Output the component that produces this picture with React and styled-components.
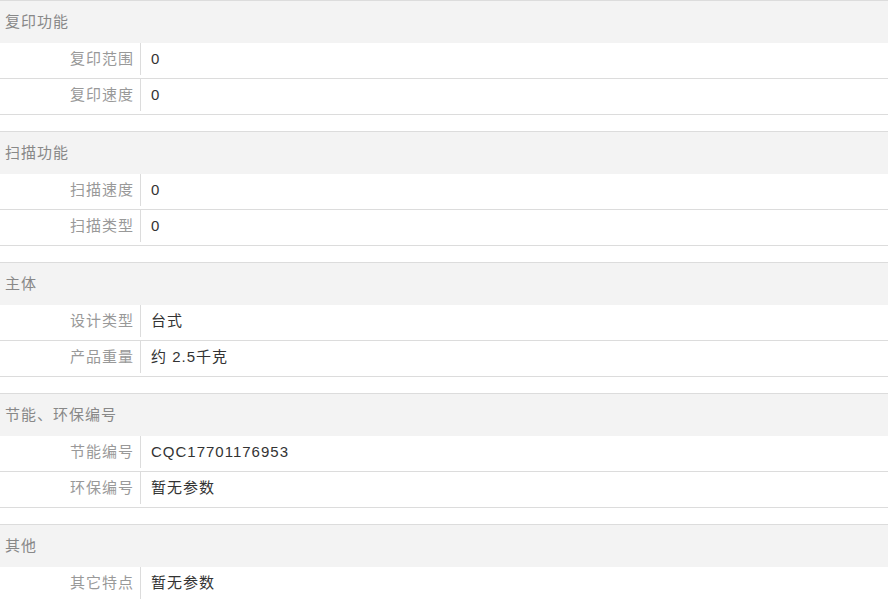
import React from "react";
import styled, { createGlobalStyle } from "styled-components";

const Global = createGlobalStyle`
  html, body { margin: 0; padding: 0; background: #fff; }
  body { font-family: "Liberation Sans", "Noto Sans CJK SC", sans-serif; }
`;

const Page = styled.div`
  width: 888px;
`;

const Section = styled.section`
  border-top: 1px solid #dcdcdc;
  margin-bottom: 16px;
`;

const Header = styled.h3`
  margin: 0;
  height: 42px;
  line-height: 42px;
  padding-left: 5px;
  background: #f3f3f3;
  color: #888;
  font-size: 15px;
  font-weight: normal;
  letter-spacing: 1px;
`;

const Row = styled.div`
  display: flex;
  align-items: flex-start;
  height: 35px;
  border-bottom: 1px solid #dcdcdc;
`;

const Label = styled.div`
  width: 134px;
  height: 32px;
  line-height: 32px;
  padding-right: 6px;
  border-right: 1px solid #dcdcdc;
  text-align: right;
  color: #999;
  font-size: 15px;
  letter-spacing: 1px;
  white-space: nowrap;
`;

const Value = styled.div`
  padding-left: 10px;
  line-height: 32px;
  color: #333;
  font-size: 15px;
  letter-spacing: 1px;
`;

const data = [
  { title: "复印功能", rows: [["复印范围", "0"], ["复印速度", "0"]] },
  { title: "扫描功能", rows: [["扫描速度", "0"], ["扫描类型", "0"]] },
  { title: "主体", rows: [["设计类型", "台式"], ["产品重量", "约 2.5千克"]] },
  { title: "节能、环保编号", rows: [["节能编号", "CQC17701176953"], ["环保编号", "暂无参数"]] },
  { title: "其他", rows: [["其它特点", "暂无参数"]] },
];

export default function App() {
  return (
    <Page>
      <Global />
      {data.map((s) => (
        <Section key={s.title}>
          <Header>{s.title}</Header>
          {s.rows.map(([k, v]) => (
            <Row key={k}>
              <Label>{k}</Label>
              <Value>{v}</Value>
            </Row>
          ))}
        </Section>
      ))}
    </Page>
  );
}
